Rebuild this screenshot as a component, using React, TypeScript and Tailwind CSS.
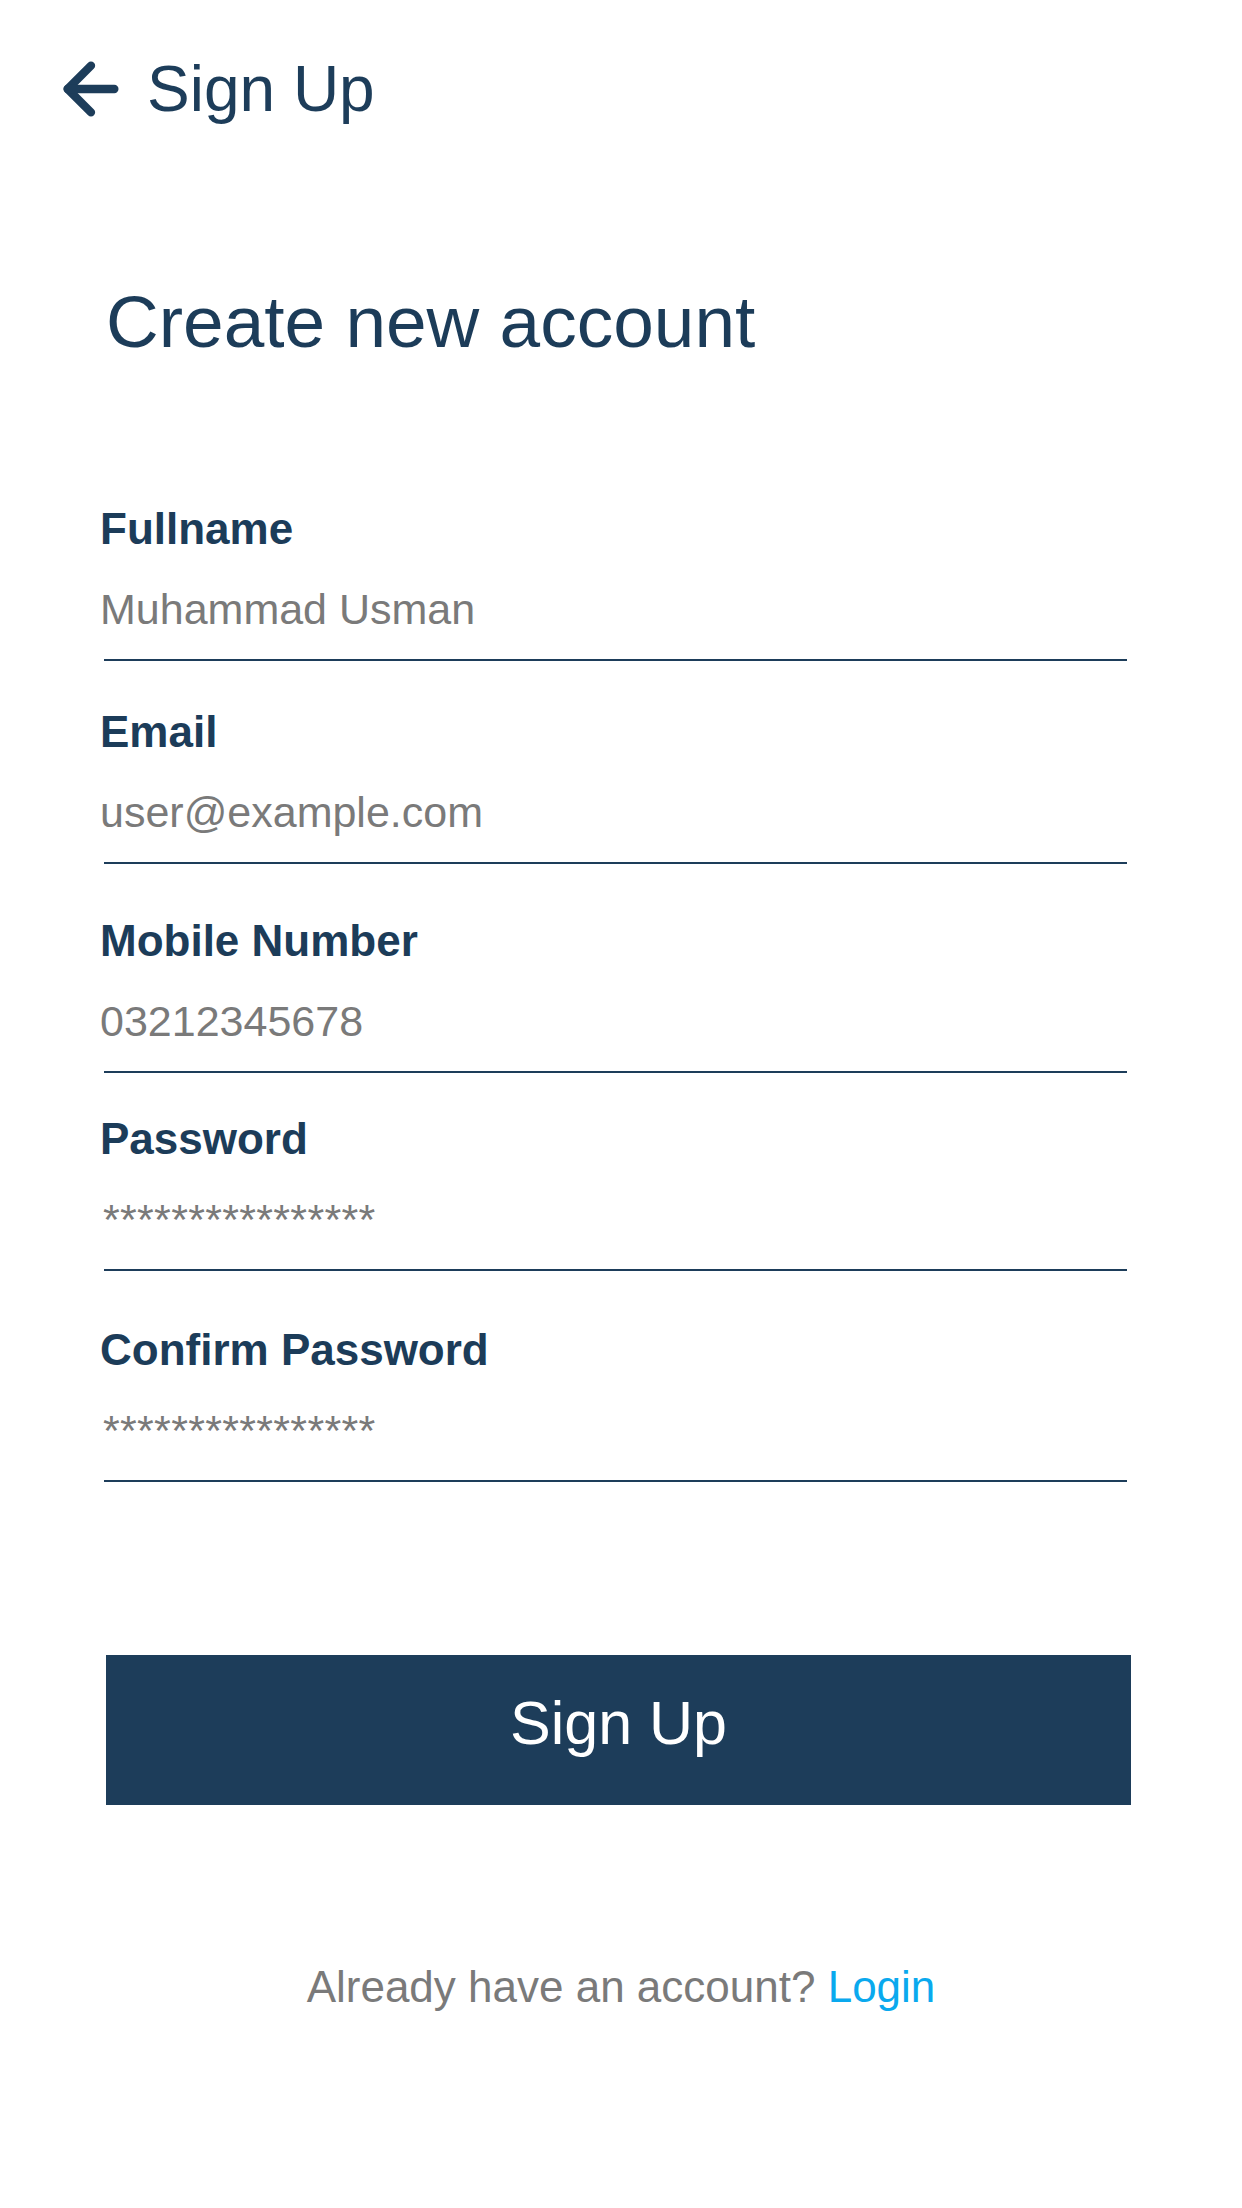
import { ArrowLeft } from "lucide-react";

const fields = [
  { label: "Fullname", placeholder: "Muhammad Usman", gap: "mt-[149px]", stars: false },
  { label: "Email", placeholder: "user@example.com", gap: "mt-[49px]", stars: false },
  { label: "Mobile Number", placeholder: "03212345678", gap: "mt-[55px]", stars: false },
  { label: "Password", placeholder: "****************", gap: "mt-[44px]", stars: true },
  { label: "Confirm Password", placeholder: "****************", gap: "mt-[57px]", stars: true },
];

function Field({ label, placeholder, gap, stars }: { label: string; placeholder: string; gap: string; stars: boolean }) {
  return (
    <div className={gap}>
      <label className="block text-[44px] font-bold leading-[44px] text-[#1c3c59]">{label}</label>
      <input
        placeholder={placeholder}
        className={
          "mt-[33px] block h-[50px] w-[1020px] bg-transparent p-0 text-[43px] text-[#7a7a7a] outline-none placeholder:text-[#7a7a7a] " +
          (stars ? "pl-[3px] tracking-[0.3px]" : "")
        }
      />
      <div className="ml-[4px] mt-[25px] h-[2px] w-[1023px] bg-[#1d3d5a]" />
    </div>
  );
}

export default function App() {
  return (
    <div className="min-h-screen w-full bg-white font-['Liberation_Sans',Arial,sans-serif]">
      {/* --- TOP BAR --- */}
      <header className="flex items-center gap-4 pl-[51px] pt-[49px]">
        <ArrowLeft className="h-[80px] w-[80px] text-[#1d3d5a]" strokeWidth={2.5} />
        <h1 className="text-[64px] leading-none text-[#1d3d5a]">Sign Up</h1>
      </header>

      {/* --- FORM --- */}
      <main className="pl-[100px]">
        <h2 className="ml-[6px] mt-[156px] text-[73px] leading-none text-[#1c3c59]">Create new account</h2>

        {fields.map((f) => (
          <Field key={f.label} {...f} />
        ))}

        <button className="ml-[6px] mt-[173px] flex h-[150px] w-[1025px] items-center justify-center bg-[#1d3d5a] pb-[14px] text-[61px] leading-none text-white">
          Sign Up
        </button>
      </main>

      <p className="mt-[160px] text-center text-[44px] leading-none text-[#7a7a7a]">
        Already have an account? <span className="text-[#0aa9ee]">Login</span>
      </p>
    </div>
  );
}
